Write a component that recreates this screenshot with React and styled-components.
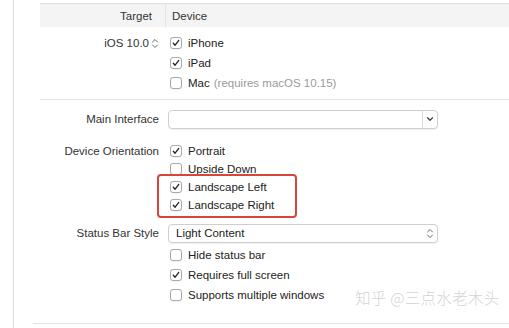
import styled, { createGlobalStyle } from 'styled-components'

const Global = createGlobalStyle`
  html, body { margin: 0; padding: 0; background: #fff; }
  body {
    font-family: "Liberation Sans", Arial, "Noto Sans CJK SC", sans-serif;
    font-size: 11.5px;
    color: #262626;
  }
`

const Page = styled.div`
  position: relative;
  width: 509px;
  height: 328px;
  overflow: hidden;
  display: flex;
`

const Gutter = styled.div`
  width: 13px;
  border-right: 1px solid #dcdcdc;
  flex-shrink: 0;
`

const Main = styled.div`
  flex: 1;
  display: flex;
  flex-direction: column;
  padding-top: 3px;
`

const Section = styled.div`
  margin-left: ${p => p.$indent ?? 26}px;
  padding: ${p => p.$pad || '0'};
  border-bottom: ${p => p.$line ? '1px solid #e2e2e2' : 'none'};
  display: flex;
  flex-direction: column;
`

const Header = styled.div`
  margin-left: 26px;
  height: 23px;
  background: #f4f4f4;
  border-top: 1px solid #dedede;
  display: grid;
  grid-template-columns: 126px 1fr;
  align-items: center;
`

const HeadCell = styled.div`
  color: #333;
  text-align: ${p => p.$right ? 'right' : 'left'};
  padding: ${p => p.$right ? '0 13px 0 0' : '0 0 0 6px'};
  height: 100%;
  display: flex;
  align-items: center;
  justify-content: ${p => p.$right ? 'flex-end' : 'flex-start'};
  border-right: ${p => p.$right ? '1px solid #e4e4e4' : 'none'};
  box-sizing: border-box;
`

const Row = styled.div`
  display: grid;
  grid-template-columns: 119px 1fr;
  column-gap: 9px;
  align-items: center;
  height: ${p => p.$h || 20}px;
  margin-top: ${p => p.$mt || 0}px;
`

const Label = styled.div`
  text-align: right;
  color: #333;
  white-space: nowrap;
  display: flex;
  justify-content: flex-end;
  align-items: center;
  gap: 2px;
`

const Check = styled.label`
  display: flex;
  align-items: center;
  gap: 6px;
  padding-left: 2px;
  white-space: nowrap;
  color: #222;
`

const Box = styled.span`
  width: 10px;
  height: 10px;
  border: 1px solid #a9a9a9;
  border-radius: 3px;
  background: #fff;
  display: flex;
  align-items: center;
  justify-content: center;
  box-shadow: 0 0.5px 0.5px rgba(0,0,0,0.08);
`

const Muted = styled.span`
  color: #9a9a9a;
  margin-left: 4px;
`

const Popup = styled.div`
  width: 268px;
  height: 17px;
  border: 1px solid #cfcfcf;
  border-radius: 4px;
  background: #fff;
  box-shadow: 0 1px 1px rgba(0,0,0,0.06);
  display: flex;
  align-items: center;
  box-sizing: content-box;
`

const PopupText = styled.div`
  flex: 1;
  padding-left: 7px;
  color: #222;
`

const PopupBtn = styled.div`
  width: 13px;
  height: 100%;
  display: flex;
  align-items: center;
  justify-content: center;
  border-left: ${p => p.$split ? '1px solid #dcdcdc' : 'none'};
  margin-right: 1px;
`

const Highlight = styled.div`
  position: absolute;
  left: 157px;
  top: 174px;
  width: 136px;
  height: 40px;
  border: 2px solid #d8463b;
  border-radius: 4px;
  pointer-events: none;
`

const Watermark = styled.div`
  position: absolute;
  left: 355px;
  top: 286px;
  font-family: "Noto Sans CJK SC", sans-serif;
  font-size: 15.5px;
  font-weight: 300;
  color: #d4d4d4;
  letter-spacing: 0.3px;
  white-space: nowrap;
`

const BottomLine = styled.div`
  margin-top: auto;
  margin-left: 19px;
  margin-bottom: 4px;
  border-bottom: 1px solid #e2e2e2;
`

function Tick() {
  return (
    <svg width="8" height="8" viewBox="0 0 8 8">
      <path d="M1.3 4.2 L3.1 6.2 L6.8 1.4" fill="none" stroke="#222" strokeWidth="1.3" strokeLinecap="round" strokeLinejoin="round" />
    </svg>
  )
}

function Checkbox({ checked, children }) {
  return (
    <Check>
      <Box>{checked && <Tick />}</Box>
      <span>{children}</span>
    </Check>
  )
}

function Stepper() {
  return (
    <svg width="8" height="11" viewBox="0 0 8 11">
      <path d="M1.5 4 L4 1.5 L6.5 4 M1.5 7 L4 9.5 L6.5 7" fill="none" stroke="#666" strokeWidth="1" strokeLinecap="round" strokeLinejoin="round" />
    </svg>
  )
}

function Chevron() {
  return (
    <svg width="8" height="6" viewBox="0 0 8 6">
      <path d="M1.5 1.8 L4 4.2 L6.5 1.8" fill="none" stroke="#444" strokeWidth="1.3" strokeLinecap="round" strokeLinejoin="round" />
    </svg>
  )
}

export default function App() {
  return (
    <>
      <Global />
      <Page>
        <Gutter />
        <Main>
          <Header>
            <HeadCell $right>Target</HeadCell>
            <HeadCell>Device</HeadCell>
          </Header>

          <Section $line $pad="6px 0 6px 0">
            <Row>
              <Label>iOS 10.0<Stepper /></Label>
              <Checkbox checked>iPhone</Checkbox>
            </Row>
            <Row>
              <span />
              <Checkbox checked>iPad</Checkbox>
            </Row>
            <Row>
              <span />
              <Checkbox>Mac<Muted>(requires macOS 10.15)</Muted></Checkbox>
            </Row>
          </Section>

          <Section $pad="9px 0 0 0">
            <Row>
              <Label>Main Interface</Label>
              <Popup>
                <PopupText />
                <PopupBtn $split><Chevron /></PopupBtn>
              </Popup>
            </Row>
            <Row $h={18} $mt={13}>
              <Label>Device Orientation</Label>
              <Checkbox checked>Portrait</Checkbox>
            </Row>
            <Row $h={18}>
              <span />
              <Checkbox>Upside Down</Checkbox>
            </Row>
            <Row $h={18}>
              <span />
              <Checkbox checked>Landscape Left</Checkbox>
            </Row>
            <Row $h={18}>
              <span />
              <Checkbox checked>Landscape Right</Checkbox>
            </Row>
            <Row $mt={9}>
              <Label>Status Bar Style</Label>
              <Popup>
                <PopupText>Light Content</PopupText>
                <PopupBtn><Stepper /></PopupBtn>
              </Popup>
            </Row>
            <Row $mt={2}>
              <span />
              <Checkbox>Hide status bar</Checkbox>
            </Row>
            <Row>
              <span />
              <Checkbox checked>Requires full screen</Checkbox>
            </Row>
            <Row>
              <span />
              <Checkbox>Supports multiple windows</Checkbox>
            </Row>
          </Section>

          <BottomLine />
        </Main>
        <Highlight />
        <Watermark>知乎 @三点水老木头</Watermark>
      </Page>
    </>
  )
}
